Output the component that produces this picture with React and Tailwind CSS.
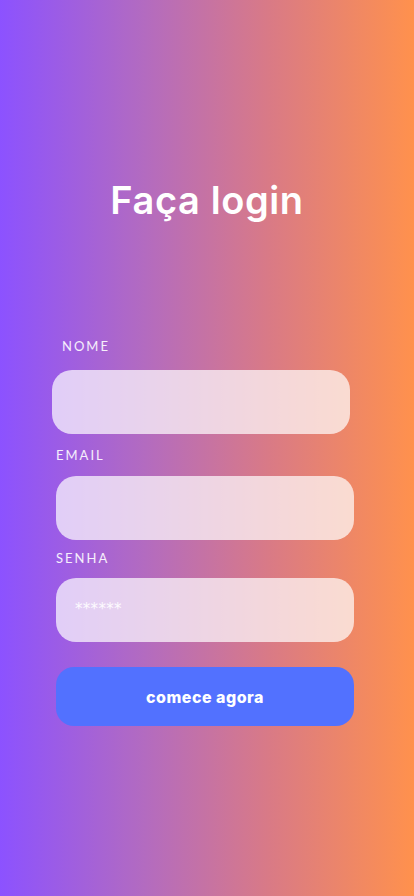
export default function App() {
  const label = "block text-[13px] leading-[16px] tracking-[2px] text-white/90 font-['Lato',sans-serif]";
  const input = "block w-[298px] h-[64px] rounded-[20px] bg-white/70";
  return (
    <div className="min-h-[896px] w-full bg-[linear-gradient(90deg,#8c52ff_0%,#b36bc0_35%,#d97a86_65%,#ff914d_100%)] font-['Inter',sans-serif]">
      <div className="pt-[176px]">
        <h1 className="text-center text-[38px] leading-[48px] font-semibold tracking-[0.6px] text-white">Faça login</h1>
      </div>
      <div className="mt-[114px]">
        <span className={label + " ml-[62px]"}>NOME</span>
        <div className={input + " ml-[52px] mt-[16px]"}></div>
        <span className={label + " ml-[56px] mt-[13px]"}>EMAIL</span>
        <div className={input + " ml-[56px] mt-[13px]"}></div>
        <span className={label + " ml-[56px] mt-[10px]"}>SENHA</span>
        <div className={input + " ml-[56px] mt-[12px] flex items-start pl-[19px] pt-[20px]"}>
          <span className="text-[15px] tracking-[0.3px] text-white/90 font-['DejaVu_Sans',sans-serif]">******</span>
        </div>
        <button className="ml-[56px] mt-[25px] flex h-[59px] w-[298px] items-center justify-center rounded-[18px] bg-[#5271ff] text-[16px] font-extrabold tracking-[0.5px] text-white">
          comece agora
        </button>
      </div>
    </div>
  );
}
